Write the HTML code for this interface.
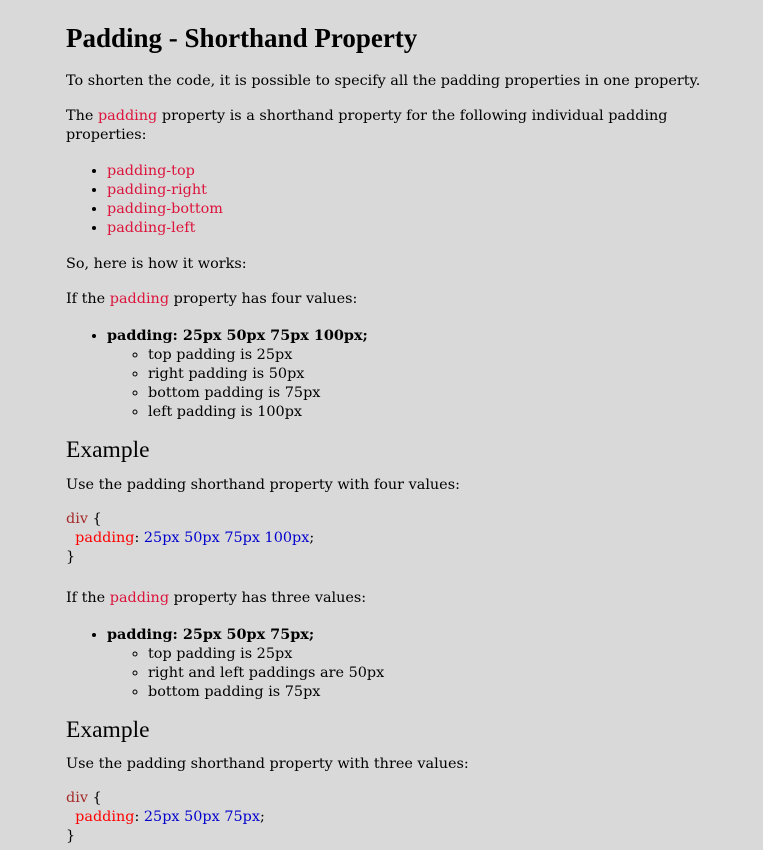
<!DOCTYPE html>
<html><head><style>
*{margin:0;padding:0}
body{background:#d9d9d9;width:763px;height:850px;overflow:hidden;font-family:"DejaVu Serif",serif;font-size:14.4px;line-height:19px;color:#000;padding-left:66px;box-sizing:border-box;padding-top:23px}
h1{font-family:"Liberation Serif",serif;font-size:27px;line-height:30px;font-weight:bold;margin-bottom:19px}
h2{font-family:"Liberation Serif",serif;font-size:23.5px;line-height:26px;font-weight:normal}
p{margin-bottom:0;width:690px;white-space:nowrap}
.r{color:#dc143c}
ul{list-style:disc;padding-left:41px}
ul ul{list-style:circle;padding-left:41px}
li::marker{color:#000}
pre{font-family:inherit;white-space:pre}
.d{color:#a52a2a}.p{color:#f00}.v{color:#0000cd}
</style></head><body>
<h1>Padding - Shorthand Property</h1>
<p>To shorten the code, it is possible to specify all the padding properties in one property.</p>
<p style="margin-top:16px">The <span class="r">padding</span> property is a shorthand property for the following individual padding<br>properties:</p>
<ul style="margin-top:17px">
<li><span class="r">padding-top</span></li><li><span class="r">padding-right</span></li><li><span class="r">padding-bottom</span></li><li><span class="r">padding-left</span></li></ul>
<p style="margin-top:17px">So, here is how it works:</p>
<p style="margin-top:16px">If the <span class="r">padding</span> property has four values:</p>
<ul style="margin-top:17px"><li><b>padding: 25px 50px 75px 100px;</b>
<ul><li>top padding is 25px</li><li>right padding is 50px</li><li>bottom padding is 75px</li><li>left padding is 100px</li></ul></li></ul>
<h2 style="margin-top:14.5px">Example</h2>
<p style="margin-top:13.5px">Use the padding shorthand property with four values:</p>
<pre style="margin-top:15px"><span class="d">div</span> {
  <span class="p">padding</span>: <span class="v">25px 50px 75px 100px</span>;
}</pre>
<p style="margin-top:22px">If the <span class="r">padding</span> property has three values:</p>
<ul style="margin-top:17px"><li><b>padding: 25px 50px 75px;</b>
<ul><li>top padding is 25px</li><li>right and left paddings are 50px</li><li>bottom padding is 75px</li></ul></li></ul>
<h2 style="margin-top:14.5px">Example</h2>
<p style="margin-top:12.5px">Use the padding shorthand property with three values:</p>
<pre style="margin-top:15px"><span class="d">div</span> {
  <span class="p">padding</span>: <span class="v">25px 50px 75px</span>;
}</pre>
</body></html>
